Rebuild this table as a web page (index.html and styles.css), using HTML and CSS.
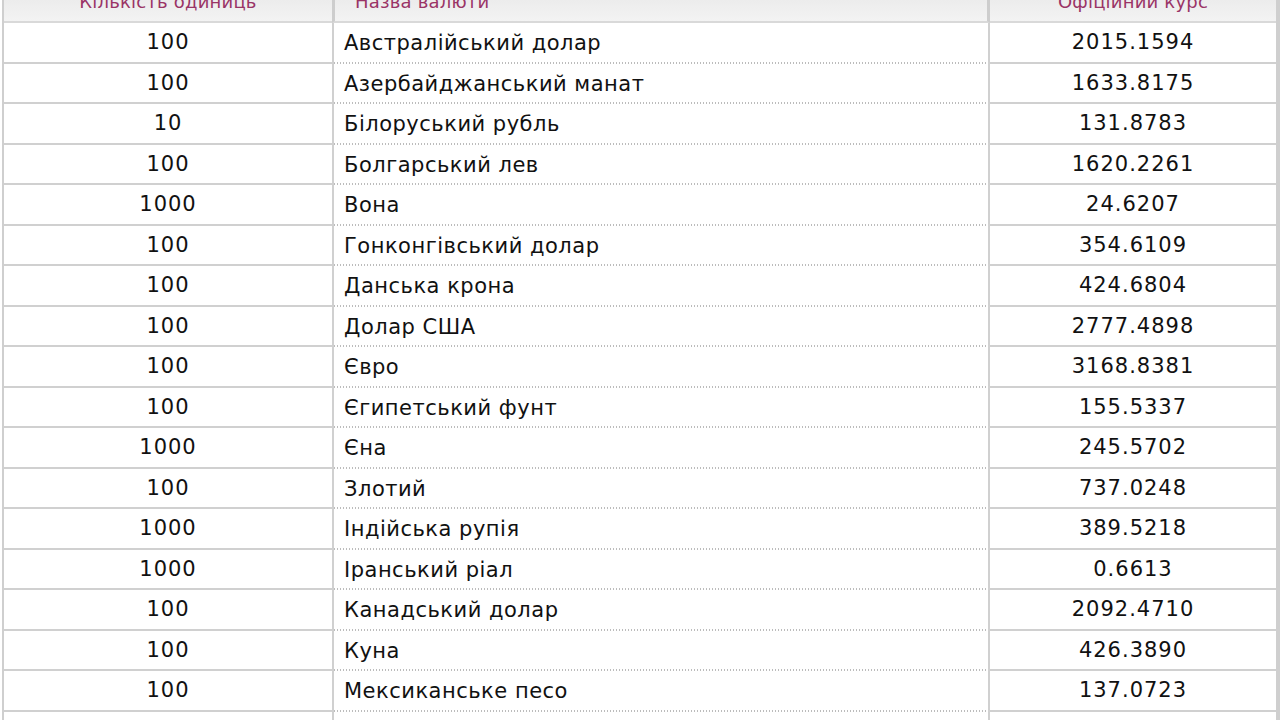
FILE: index.html
```html
<!DOCTYPE html>
<html lang="uk">
<head>
<meta charset="utf-8">
<title>Офіційний курс</title>
<link rel="stylesheet" href="styles.css">
</head>
<body>
<table class="rates">
  <thead>
    <tr>
      <th class="c-qty">Кількість одиниць</th>
      <th class="c-name">Назва валюти</th>
      <th class="c-rate">Офіційний курс</th>
    </tr>
  </thead>
  <tbody>
    <tr><td class="c-qty">100</td><td class="c-name">Австралійський долар</td><td class="c-rate">2015.1594</td></tr>
    <tr><td class="c-qty">100</td><td class="c-name">Азербайджанський манат</td><td class="c-rate">1633.8175</td></tr>
    <tr><td class="c-qty">10</td><td class="c-name">Білоруський рубль</td><td class="c-rate">131.8783</td></tr>
    <tr><td class="c-qty">100</td><td class="c-name">Болгарський лев</td><td class="c-rate">1620.2261</td></tr>
    <tr><td class="c-qty">1000</td><td class="c-name">Вона</td><td class="c-rate">24.6207</td></tr>
    <tr><td class="c-qty">100</td><td class="c-name">Гонконгівський долар</td><td class="c-rate">354.6109</td></tr>
    <tr><td class="c-qty">100</td><td class="c-name">Данська крона</td><td class="c-rate">424.6804</td></tr>
    <tr><td class="c-qty">100</td><td class="c-name">Долар США</td><td class="c-rate">2777.4898</td></tr>
    <tr><td class="c-qty">100</td><td class="c-name">Євро</td><td class="c-rate">3168.8381</td></tr>
    <tr><td class="c-qty">100</td><td class="c-name">Єгипетський фунт</td><td class="c-rate">155.5337</td></tr>
    <tr><td class="c-qty">1000</td><td class="c-name">Єна</td><td class="c-rate">245.5702</td></tr>
    <tr><td class="c-qty">100</td><td class="c-name">Злотий</td><td class="c-rate">737.0248</td></tr>
    <tr><td class="c-qty">1000</td><td class="c-name">Індійська рупія</td><td class="c-rate">389.5218</td></tr>
    <tr><td class="c-qty">1000</td><td class="c-name">Іранський ріал</td><td class="c-rate">0.6613</td></tr>
    <tr><td class="c-qty">100</td><td class="c-name">Канадський долар</td><td class="c-rate">2092.4710</td></tr>
    <tr><td class="c-qty">100</td><td class="c-name">Куна</td><td class="c-rate">426.3890</td></tr>
    <tr><td class="c-qty">100</td><td class="c-name">Мексиканське песо</td><td class="c-rate">137.0723</td></tr>
    <tr><td class="c-qty">100</td><td class="c-name">Молдовський лей</td><td class="c-rate">146.2153</td></tr>
  </tbody>
</table>
</body>
</html>
```
FILE: styles.css
```css
html, body {
  margin: 0;
  padding: 0;
  background: #fff;
  overflow: hidden;
}

body {
  font-family: "DejaVu Sans", Verdana, sans-serif;
  font-size: 21px;
  color: #111;
}

.rates {
  border-collapse: separate;
  border-spacing: 0;
  margin: -18px 0 0 2px;
  width: 1278px;
  table-layout: fixed;
  border-left: 2px solid #cfcfcf;
  border-right: 4px solid #cfcfcf;
}

.rates th {
  height: 39px;
  padding: 0;
  font-size: 18px;
  letter-spacing: 0.2px;
  font-weight: normal;
  color: #9a3466;
  background: linear-gradient(#e6e6e6, #f3f3f3);
  border-bottom: 2px solid #d9d9d9;
  vertical-align: middle;
}

.rates th.c-name {
  text-align: left;
  padding-left: 20px;
  border-left: 3px solid #cdcdcd;
  border-right: 3px solid #cdcdcd;
}

.rates td {
  height: 38.5px;
  padding: 0;
  vertical-align: middle;
  border-bottom: 2px solid #d0d0d0;
  letter-spacing: 1px;
}

.c-qty {
  width: 328px;
  text-align: center;
}

.c-name {
  width: 632px;
  text-align: left;
}

.c-rate {
  text-align: center;
}

.rates td.c-name {
  padding-left: 10px;
  letter-spacing: 0.5px;
  border-left: 2px solid #d0d0d0;
  border-right: 2px solid #d0d0d0;
  border-bottom: none;
  background: linear-gradient(to right, #bcbcbc 0 1.5px, transparent 1.5px) left bottom / 3px 2px repeat-x;
}
```
